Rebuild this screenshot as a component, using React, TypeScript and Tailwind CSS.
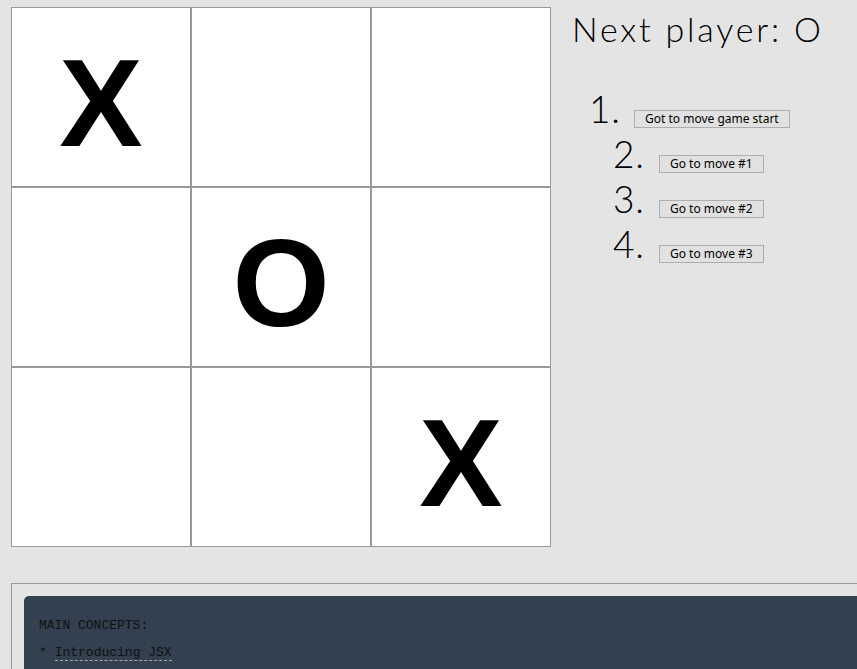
const squares = ["X", null, null, null, "O", null, null, null, "X"];

const moves = [
    { n: "1.", label: "Got to move game start", first: true },
    { n: "2.", label: "Go to move #1", first: false },
    { n: "3.", label: "Go to move #2", first: false },
    { n: "4.", label: "Go to move #3", first: false },
];

export default function App() {
    return (
        <div className="h-screen bg-[#e4e4e4] overflow-hidden">
            <div className="flex pt-[7px] pl-[11px]">
                {/* Board */}
                <div className="grid grid-cols-[repeat(3,180px)] shrink-0">
                    {squares.map((v, i) => (
                        <div
                            key={i}
                            className="w-[180px] h-[180px] border border-[#999] bg-white flex items-center justify-center pt-[11px] font-['Liberation_Sans',Arial,sans-serif] font-bold text-[125px] leading-none text-black"
                        >
                            {v}
                        </div>
                    ))}
                </div>

                {/* Game info */}
                <div className="ml-[21px] font-['Lato',sans-serif] font-light text-black">
                    <div className="mt-[2px] text-[34px] leading-[40px] tracking-[2.8px] whitespace-nowrap">
                        Next player: O
                    </div>
                    <div className="mt-[37px]">
                        {moves.map((m) => (
                            <div key={m.n} className="flex items-baseline h-[45px]">
                                <span
                                    className={
                                        m.first
                                            ? "w-[49px] text-right text-[37px] leading-[45px] tracking-[1px]"
                                            : "w-[73px] text-right text-[37px] leading-[45px] tracking-[1px]"
                                    }
                                >
                                    {m.n}
                                </span>
                                <button
                                    className={
                                        m.first
                                            ? "ml-[13px] h-[18px] px-[10px] border border-[#adadad] bg-[#e1e1e1] font-['Noto_Sans',sans-serif] font-normal text-[12px] leading-[16px] text-black whitespace-nowrap"
                                            : "ml-[14px] h-[18px] px-[10px] border border-[#adadad] bg-[#e1e1e1] font-['Noto_Sans',sans-serif] font-normal text-[12px] leading-[16px] text-black whitespace-nowrap"
                                    }
                                >
                                    {m.label}
                                </button>
                            </div>
                        ))}
                    </div>
                </div>
            </div>

            {/* Docs box */}
            <div className="mt-[36px] ml-[11px] border-t border-l border-[#999] pt-3 pl-3">
                <div className="bg-[#32404f] rounded-tl-[5px] pl-[15px] pt-4 h-[73px] font-['Liberation_Mono',monospace] text-[13px] leading-[27px] text-[#111]">
                    <div>MAIN CONCEPTS:</div>
                    <div>
                        *{" "}
                        <span className="border-b border-dashed border-[#aaa]">
                            Introducing JSX
                        </span>
                    </div>
                </div>
            </div>
        </div>
    );
}
